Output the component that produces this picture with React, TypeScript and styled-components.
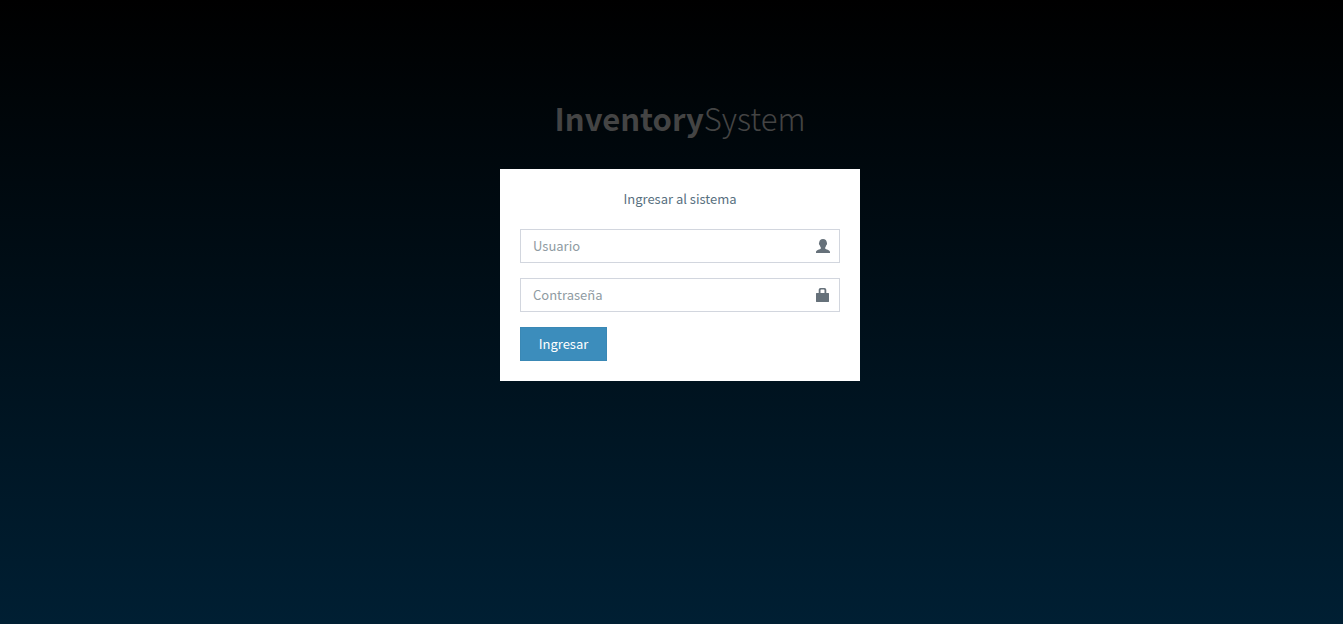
import React from 'react';
import styled, { createGlobalStyle } from 'styled-components';

const GlobalStyle = createGlobalStyle`
  *, *::before, *::after { box-sizing: border-box; }
  body {
    margin: 0;
    background: #001f33;
    font-family: 'Noto Sans CJK JP', 'Noto Sans', sans-serif;
    font-size: 13px;
    line-height: 20px;
    color: #587080;
  }
`;

const Page = styled.main`
  min-height: 100vh;
  padding: 7vw 0 20px 17px;
  background: linear-gradient(#000000, #001f33);
`;

const LoginBox = styled.div`
  width: 100%;
  max-width: 360px;
  margin: 0 auto;
`;

const Logo = styled.h1`
  margin: 0 0 27px;
  font-size: 31px;
  line-height: 48px;
  font-weight: 300;
  text-align: center;
`;

const LogoLink = styled.a`
  color: #444444;
  text-decoration: none;

  b { font-weight: 700; }
`;

const Card = styled.section`
  padding: 20px;
  background: #ffffff;
`;

const Message = styled.p`
  margin: 0 0 20px;
  text-align: center;
`;

const Field = styled.label`
  position: relative;
  display: block;
  margin-bottom: 15px;
`;

const Input = styled.input`
  display: block;
  width: 100%;
  height: 34px;
  padding: 5px 42px 7px 12px;
  border: 1px solid #d2d6de;
  border-radius: 0;
  background: #ffffff;
  color: #555555;
  font: inherit;

  &::placeholder { color: #8f9ba2; opacity: 1; }
  &:focus { outline: none; border-color: #3c8dbc; }
`;

const FieldIcon = styled.svg`
  position: absolute;
  top: 10px;
  right: 10px;
  width: 14px;
  height: 14px;
  fill: #66717a;
  pointer-events: none;
`;

const SubmitButton = styled.button`
  display: block;
  width: 87px;
  height: 34px;
  padding: 0;
  border: 1px solid #3a88b5;
  border-radius: 0;
  background: #3c8dbc;
  color: #ffffff;
  font: inherit;
  cursor: pointer;
`;

export default function App() {
  return (
    <>
      <GlobalStyle />
      <Page>
        <LoginBox>
          <Logo>
            <LogoLink href="#"><b>Inventory</b>System</LogoLink>
          </Logo>
          <Card>
            <Message>Ingresar al sistema</Message>
            <form onSubmit={(e) => e.preventDefault()}>
              <Field>
                <Input type="text" name="usuario" placeholder="Usuario" aria-label="Usuario" />
                <FieldIcon viewBox="0 0 14 14" aria-hidden="true">
                  <path d="M7 0C9.4 0 10.7 1.3 10.7 3.3C11.1 3.7 11.2 4.2 11 4.9C10.9 5.6 10.7 5.9 10.4 6C10.2 7 9.7 7.8 9.2 8.4V9.6C9.8 10.7 14 11 14 13V14H0V13C0 11 4.2 10.7 4.8 9.6V8.4C4.3 7.8 3.8 7 3.6 6C3.3 5.9 3.1 5.6 3 4.9C2.8 4.2 2.9 3.7 3.3 3.3C3.3 1.3 4.6 0 7 0Z" />
                </FieldIcon>
              </Field>
              <Field>
                <Input type="password" name="contrasena" placeholder="Contraseña" aria-label="Contraseña" />
                <FieldIcon viewBox="0 0 14 14" aria-hidden="true">
                  <path fillRule="evenodd" d="M4.5 0H8.5C9.5 0 10.3 .8 10.3 2V5H12.6Q13 5 13 5.4V13.6Q13 14 12.6 14H.4Q0 14 0 13.6V5.4Q0 5 .4 5H2.7V2C2.7 .8 3.5 0 4.5 0ZM5.2 1.5Q4.5 1.5 4.5 2.3V5H8.5V2.3Q8.5 1.5 7.8 1.5Z" />
                </FieldIcon>
              </Field>
              <SubmitButton type="submit">Ingresar</SubmitButton>
            </form>
          </Card>
        </LoginBox>
      </Page>
    </>
  );
}
